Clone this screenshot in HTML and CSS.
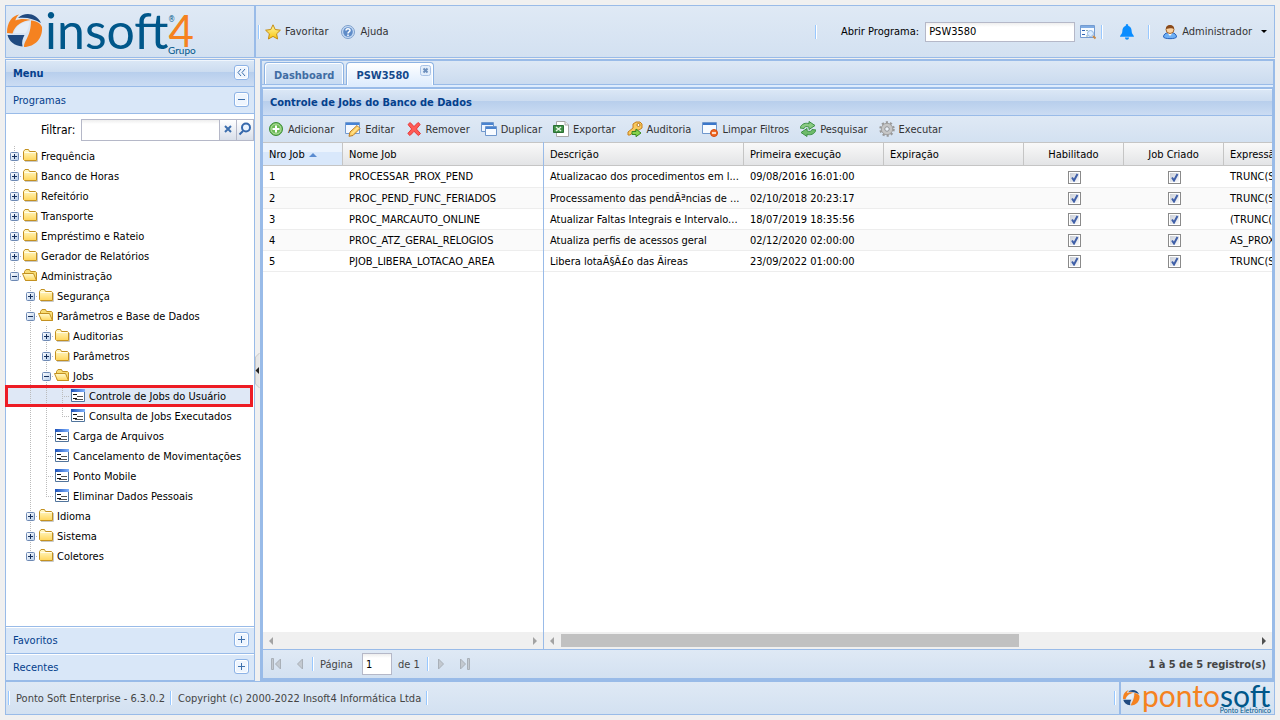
FILE: index.html
```html
<!DOCTYPE html>
<html lang="pt-BR">
<head>
  <meta charset="UTF-8">
  <meta name="viewport" content="width=device-width, initial-scale=1.0">
  <title>Ponto Soft Enterprise</title>
  <link rel="stylesheet" href="styles.css">
</head>
<body>
  <svg class="defs" aria-hidden="true">
    <defs>
      <linearGradient id="g-folder" x1="0" y1="0" x2="0" y2="1"><stop offset="0" stop-color="#fffbd0"/><stop offset="1" stop-color="#ffd65c"/></linearGradient>
      <linearGradient id="g-node" x1="0" y1="0" x2="1" y2="1"><stop offset="0" stop-color="#ffffff"/><stop offset="1" stop-color="#b4cbe8"/></linearGradient>
      <linearGradient id="g-form" x1="0" y1="0" x2="1" y2="0"><stop offset="0" stop-color="#1c50b8"/><stop offset="1" stop-color="#82b4ff"/></linearGradient>
      <linearGradient id="g-star" x1="0" y1="0" x2="0" y2="1"><stop offset="0" stop-color="#fff9a8"/><stop offset="1" stop-color="#f7c40c"/></linearGradient>
    </defs>
    <symbol id="plus" viewBox="0 0 9 9"><rect x=".5" y=".5" width="8" height="8" rx="1" fill="url(#g-node)" stroke="#6d89b4"/><path d="M2 4.500H7M4.500 2V7" stroke="#16305c"/></symbol>
    <symbol id="minus" viewBox="0 0 9 9"><rect x=".5" y=".5" width="8" height="8" rx="1" fill="url(#g-node)" stroke="#6d89b4"/><path d="M2 4.500H7" stroke="#16305c"/></symbol>
    <symbol id="folder" viewBox="0 0 16 16"><path d="M3 13.500H15.500V5" fill="none" stroke="#c9c9c9"/><path d="M1.500 11.500V3.500L3 1.500H6.500L7.500 3.500H13.500L14.500 4.500V12.500H2.500Z" fill="url(#g-folder)" stroke="#c39121"/><path d="M2.500 4.500H13.500" stroke="#fffdec"/></symbol>
    <symbol id="folder-open" viewBox="0 0 16 16"><path d="M2.500 7V3.500L4 1.500H7.500L8.500 3.500H13.500L14.500 4.500V12.500H3.500Z" fill="#f7dc75" stroke="#c39121"/><path d="M.5 5.500H11.500L14.500 12.500H3.500Z" fill="url(#g-folder)" stroke="#c39121" stroke-linejoin="round"/></symbol>
    <symbol id="form" viewBox="0 0 16 16"><path d="M1.500 1.500H14.500V13.500H1.500Z" fill="#fff" stroke="#51749c"/><path d="M1 1H15V4H1Z" fill="url(#g-form)"/><path d="M3 6.500H7M3 10.500H7" stroke="#111"/><path d="M7 8.500H13M5 11.500H13" stroke="#555"/></symbol>
    <symbol id="star" viewBox="0 0 16 16"><path d="M8 .8 10.200 5.500 15.400 6.200 11.600 9.800 12.600 15 8 12.400 3.400 15 4.400 9.800.6 6.200 5.800 5.500Z" fill="url(#g-star)" stroke="#c58d13" stroke-linejoin="round"/></symbol>
    <symbol id="help" viewBox="0 0 16 16"><circle cx="8" cy="8" r="6.500" fill="#c7dcf5" stroke="#7d9fcc"/><circle cx="8" cy="8" r="4.800" fill="#5f8cc8"/><path d="M6 6.600C6 4.200 10 4.200 10 6.500 10 8 8 7.900 8 9.400M8 10.500V12" fill="none" stroke="#fff" stroke-width="1.500"/></symbol>
    <symbol id="find" viewBox="0 0 16 16"><path d="M.5 1.500H14.500V13.500H.5Z" fill="#f7fbff" stroke="#739bd0"/><path d="M1 2H14V4H1Z" fill="#7fabe3"/><path d="M2 6.500H5M2 10.500H5" stroke="#2f65b5"/><path d="M6 6.500H8M6 12H8" stroke="#8aa"/><circle cx="10.500" cy="9.500" r="3" fill="#d9ecff" stroke="#92b5df"/><path d="M13 12 15.500 14.500" stroke="#c98b4a" stroke-width="2"/></symbol>
    <symbol id="bell" viewBox="0 0 16 16"><path d="M8 0C9 0 9.300.8 9.200 1.700 12 2.500 12.600 5 12.700 7.500 12.800 10.500 15 11 15 12.800H1C1 11 3.200 10.500 3.300 7.500 3.400 5 4 2.500 6.800 1.700 6.700.8 7 0 8 0Z" fill="#0a8dff"/><path d="M6 13.500H10C10 16.500 6 16.500 6 13.500Z" fill="#0a8dff"/></symbol>
    <symbol id="user" viewBox="0 0 16 16"><path d="M1.500 13C1.500 10 4 9 6 8.800H10C12 9 14.500 10 14.500 13 14 15.200 2 15.200 1.500 13Z" fill="#6fb0f5" stroke="#2763bd"/><path d="M5.500 9 8 12 10.500 9Z" fill="#fff"/><circle cx="8" cy="5.500" r="4" fill="#fbd4a4" stroke="#a0652d"/><path d="M4 5C3.500-.5 12.500-.5 12 5 10 3.400 6 5 4 5Z" fill="#8a4a1c"/></symbol>
    <symbol id="add" viewBox="0 0 16 16"><circle cx="8" cy="8" r="6.500" fill="#6dbb56" stroke="#3c8e38"/><circle cx="8" cy="8" r="5" fill="none" stroke="#b7e0a4"/><path d="M8 4.500V11.500M4.500 8H11.500" stroke="#fff" stroke-width="2"/></symbol>
    <symbol id="edit" viewBox="0 0 16 16"><path d="M.5 1.500H14.500V12.500H.5Z" fill="#f3f8ff" stroke="#739bd0"/><path d="M1 2H14V4H1Z" fill="#4582d4"/><path d="M5 11 12 4.500 15 7.500 8 14.500 4 15.300Z" fill="#ffd268" stroke="#b77a24"/><path d="M7 12.500 13.300 6.200" stroke="#fff2b0"/></symbol>
    <symbol id="remove" viewBox="0 0 16 16"><path d="M2 3.500 4.200 1.500 8 5.600 12 1.500 14.200 3.400 10.400 8 14.500 12.600 12.300 14.500 8 10.300 4 14.500 1.800 12.500 5.700 8Z" fill="#ff5b55" stroke="#e5383a" stroke-linejoin="round"/></symbol>
    <symbol id="copy" viewBox="0 0 16 16"><path d="M.5 1.500H12.500V10.500H.5Z" fill="#eef5ff" stroke="#6f97cc"/><path d="M1 2H12V4H1Z" fill="#4a83cf"/><path d="M4.500 5.500H15.500V14.500H4.500Z" fill="#f8fbff" stroke="#6f97cc"/><path d="M5 6H15V8H5Z" fill="#4a83cf"/></symbol>
    <symbol id="excel" viewBox="0 0 16 16"><path d="M3.500.5H12L15.500 4V15.500H3.500Z" fill="#fff" stroke="#a8a8a8"/><path d="M12 .5V4H15.500" fill="#eee" stroke="#a8a8a8"/><path d="M.5 4.500H10.500V11.500H.5Z" fill="#3f8f46" stroke="#2b7033"/><path d="M3 6 8 10M8 6 3 10" stroke="#e5f5e2" stroke-width="1.500"/></symbol>
    <symbol id="key" viewBox="0 0 16 16"><path d="M6 3 9 1H13L15 3V7L12 9H9L3 14H1V11L6 7Z" fill="#f9c95c" stroke="#c47f1f"/><circle cx="11.500" cy="4" r="1.500" fill="#fff" stroke="#b5761f"/><path d="M5 10.500H9V8L14 12 9 15.700V13.500H5Z" fill="#87d34b" stroke="#388a23"/></symbol>
    <symbol id="clear" viewBox="0 0 16 16"><path d="M.5 1.500H14.500V12.500H.5Z" fill="#f7fbff" stroke="#6f97cc"/><path d="M1 2H14V4H1Z" fill="#3976ca"/><circle cx="12" cy="12" r="3.500" fill="#f26b25" stroke="#d0490e"/><path d="M10 12H14" stroke="#fff" stroke-width="1.500"/></symbol>
    <symbol id="refresh" viewBox="0 0 16 16"><path d="M0 7C1.500 2.500 6 1.500 9 2.800V.5L15 4.500 9 8.500V6.200C6.500 5 4.500 5.500 4 7.500Z" fill="#8acb82" stroke="#3f9148"/><path d="M16 9C14.500 13.500 10 14.500 7 13.200V15.500L1 11.500 7 7.500V9.800C9.500 11 11.500 10.500 12 8.500Z" fill="#6ebb69" stroke="#3f9148"/></symbol>
    <symbol id="gear" viewBox="0 0 16 16"><circle cx="8" cy="8" r="6.500" fill="none" stroke="#999" stroke-width="2.500" stroke-dasharray="2.100 2"/><circle cx="8" cy="8" r="4.200" fill="none" stroke="#c6c6c6" stroke-width="3"/><circle cx="8" cy="8" r="5.700" fill="none" stroke="#a0a0a0"/><circle cx="8" cy="8" r="2.300" fill="#eaf1f9" stroke="#8d8d8d"/></symbol>
    <symbol id="ball" viewBox="0 0 36 34"><path d="M11 5C17-1 29-1 34 10 27 6 20 4 11 5Z" fill="#204a80"/><path d="M0 20C0 9 5 3 12 1.500 9.500 4 8.500 6 8.500 7.500 13 5.500 18 5.500 24 7 15 8 8 12 5.500 20.500Z" fill="#f58220"/><path d="M.5 22H17.500C15.500 26 14.500 29 15.500 33.500 7 33 2 28 .5 22Z" fill="#204a80"/><path d="M24 7.500C30 8 33 10 35 14 36 25 28 34 17 34 17 27 24 24 24 7.500Z" fill="#f58220"/><path d="M7 20C9 13 14 9.500 22.500 8.500 22 13 21 17 18.500 20Z" fill="#e6eef7"/></symbol>
  </svg>

  <div class="app">
    <header class="top">
      <div class="brand">
        <svg class="brand-mark"><use href="#ball"/></svg>
        <span class="brand-name">insoft</span>
        <span class="brand-four">4</span>
        <span class="brand-reg">®</span>
        <span class="brand-sub">Grupo</span>
      </div>
      <div class="topbar">
        <i class="sep"></i>
        <button class="btn" type="button"><svg class="icon"><use href="#star"/></svg>Favoritar</button>
        <button class="btn" type="button"><svg class="icon"><use href="#help"/></svg>Ajuda</button>
        <i class="sep push"></i>
        <label class="open-label" for="programa">Abrir Programa:</label>
        <input class="field open-field" id="programa" type="text" value="PSW3580">
        <button class="btn find-btn" type="button" aria-label="Localizar"><svg class="icon"><use href="#find"/></svg></button>
        <i class="sep"></i>
        <button class="btn bell-btn" type="button" aria-label="Avisos"><svg class="icon"><use href="#bell"/></svg></button>
        <i class="sep"></i>
        <button class="btn user-btn" type="button"><svg class="icon"><use href="#user"/></svg>Administrador<span class="caret"></span></button>
      </div>
    </header>

    <div class="middle">
      <aside class="sidebar">
        <div class="panel-title menu-title">Menu
          <button class="tool" type="button" aria-label="Recolher"><svg viewBox="0 0 15 15"><path d="M7 4 4 7.500 7 11M11 4 8 7.500 11 11"/></svg></button>
        </div>
        <div class="accordion">Programas
          <button class="tool" type="button" aria-label="Fechar Programas"><svg viewBox="0 0 15 15"><path d="M4 7.500H11"/></svg></button>
        </div>
        <div class="filter">
          <label for="filtro">Filtrar:</label>
          <input class="field" id="filtro" type="text">
          <button class="trigger" type="button" aria-label="Limpar"><svg viewBox="0 0 16 20"><path d="M5 6 11 12M11 6 5 12" stroke="#3d6fae" stroke-width="2"/></svg></button>
          <button class="trigger" type="button" aria-label="Pesquisar"><svg viewBox="0 0 16 20"><circle cx="9" cy="7.500" r="4" fill="#eaf4ff" stroke="#3568ac" stroke-width="2"/><path d="M6 11 2.500 14.500" stroke="#3568ac" stroke-width="2"/></svg></button>
        </div>
        <ul class="tree">
          <li><i class="cell node"><svg><use href="#plus"/></svg></i><svg class="icon"><use href="#folder"/></svg><a href="#">Frequência</a></li>
          <li><i class="cell node"><svg><use href="#plus"/></svg></i><svg class="icon"><use href="#folder"/></svg><a href="#">Banco de Horas</a></li>
          <li><i class="cell node"><svg><use href="#plus"/></svg></i><svg class="icon"><use href="#folder"/></svg><a href="#">Refeitório</a></li>
          <li><i class="cell node"><svg><use href="#plus"/></svg></i><svg class="icon"><use href="#folder"/></svg><a href="#">Transporte</a></li>
          <li><i class="cell node"><svg><use href="#plus"/></svg></i><svg class="icon"><use href="#folder"/></svg><a href="#">Empréstimo e Rateio</a></li>
          <li><i class="cell node"><svg><use href="#plus"/></svg></i><svg class="icon"><use href="#folder"/></svg><a href="#">Gerador de Relatórios</a></li>
          <li><i class="cell node end"><svg><use href="#minus"/></svg></i><svg class="icon"><use href="#folder-open"/></svg><a href="#">Administração</a></li>
          <li><i class="cell"></i><i class="cell node"><svg><use href="#plus"/></svg></i><svg class="icon"><use href="#folder"/></svg><a href="#">Segurança</a></li>
          <li><i class="cell"></i><i class="cell node"><svg><use href="#minus"/></svg></i><svg class="icon"><use href="#folder-open"/></svg><a href="#">Parâmetros e Base de Dados</a></li>
          <li><i class="cell"></i><i class="cell line"></i><i class="cell node"><svg><use href="#plus"/></svg></i><svg class="icon"><use href="#folder"/></svg><a href="#">Auditorias</a></li>
          <li><i class="cell"></i><i class="cell line"></i><i class="cell node"><svg><use href="#plus"/></svg></i><svg class="icon"><use href="#folder"/></svg><a href="#">Parâmetros</a></li>
          <li><i class="cell"></i><i class="cell line"></i><i class="cell node"><svg><use href="#minus"/></svg></i><svg class="icon"><use href="#folder-open"/></svg><a href="#">Jobs</a></li>
          <li class="selected"><i class="cell"></i><i class="cell line"></i><i class="cell line"></i><i class="cell node"></i><svg class="icon"><use href="#form"/></svg><a href="#">Controle de Jobs do Usuário</a></li>
          <li><i class="cell"></i><i class="cell line"></i><i class="cell line"></i><i class="cell node end"></i><svg class="icon"><use href="#form"/></svg><a href="#">Consulta de Jobs Executados</a></li>
          <li><i class="cell"></i><i class="cell line"></i><i class="cell node"></i><svg class="icon"><use href="#form"/></svg><a href="#">Carga de Arquivos</a></li>
          <li><i class="cell"></i><i class="cell line"></i><i class="cell node"></i><svg class="icon"><use href="#form"/></svg><a href="#">Cancelamento de Movimentações</a></li>
          <li><i class="cell"></i><i class="cell line"></i><i class="cell node"></i><svg class="icon"><use href="#form"/></svg><a href="#">Ponto Mobile</a></li>
          <li><i class="cell"></i><i class="cell line"></i><i class="cell node end"></i><svg class="icon"><use href="#form"/></svg><a href="#">Eliminar Dados Pessoais</a></li>
          <li><i class="cell"></i><i class="cell node"><svg><use href="#plus"/></svg></i><svg class="icon"><use href="#folder"/></svg><a href="#">Idioma</a></li>
          <li><i class="cell"></i><i class="cell node"><svg><use href="#plus"/></svg></i><svg class="icon"><use href="#folder"/></svg><a href="#">Sistema</a></li>
          <li><i class="cell"></i><i class="cell node end"><svg><use href="#plus"/></svg></i><svg class="icon"><use href="#folder"/></svg><a href="#">Coletores</a></li>
        </ul>
        <div class="accordion closed">Favoritos
          <button class="tool" type="button" aria-label="Abrir Favoritos"><svg viewBox="0 0 15 15"><path d="M4 7.500H11M7.500 4V11"/></svg></button>
        </div>
        <div class="accordion closed">Recentes
          <button class="tool" type="button" aria-label="Abrir Recentes"><svg viewBox="0 0 15 15"><path d="M4 7.500H11M7.500 4V11"/></svg></button>
        </div>
      </aside>

      <div class="splitter"><svg viewBox="0 0 5 35"><path d="M4.500 0 .5 4V31L4.500 35" fill="#e6e6e6" stroke="#c8c8c8"/><path d="M4 14V21L.5 17.500Z" fill="#222"/></svg></div>

      <main class="content">
        <nav class="tabs">
          <a class="tab" href="#">Dashboard</a>
          <a class="tab active" href="#">PSW3580<svg class="tab-close" viewBox="0 0 11 11"><rect x=".5" y=".5" width="10" height="10" rx="2" fill="#e3eefb" stroke="#a9c3e6"/><path d="M3.500 3.500 7.500 7.500M7.500 3.500 3.500 7.500" stroke="#6e90bd" stroke-width="2"/></svg></a>
        </nav>
        <section class="grid-panel">
          <h1 class="panel-title">Controle de Jobs do Banco de Dados</h1>
          <div class="toolbar">
            <button class="btn" type="button"><svg class="icon"><use href="#add"/></svg>Adicionar</button>
            <button class="btn" type="button"><svg class="icon"><use href="#edit"/></svg>Editar</button>
            <button class="btn" type="button"><svg class="icon"><use href="#remove"/></svg>Remover</button>
            <button class="btn" type="button"><svg class="icon"><use href="#copy"/></svg>Duplicar</button>
            <button class="btn" type="button"><svg class="icon"><use href="#excel"/></svg>Exportar</button>
            <button class="btn" type="button"><svg class="icon"><use href="#key"/></svg>Auditoria</button>
            <button class="btn" type="button"><svg class="icon"><use href="#clear"/></svg>Limpar Filtros</button>
            <button class="btn" type="button"><svg class="icon"><use href="#refresh"/></svg>Pesquisar</button>
            <button class="btn" type="button"><svg class="icon"><use href="#gear"/></svg>Executar</button>
          </div>
          <div class="grid">
            <div class="locked">
              <table>
                <colgroup><col class="w80"><col class="w200"></colgroup>
                <thead><tr><th class="sorted">Nro Job<span class="sort"></span></th><th>Nome Job</th></tr></thead>
                <tbody>
                  <tr><td>1</td><td>PROCESSAR_PROX_PEND</td></tr>
                  <tr><td>2</td><td>PROC_PEND_FUNC_FERIADOS</td></tr>
                  <tr><td>3</td><td>PROC_MARCAUTO_ONLINE</td></tr>
                  <tr><td>4</td><td>PROC_ATZ_GERAL_RELOGIOS</td></tr>
                  <tr><td>5</td><td>PJOB_LIBERA_LOTACAO_AREA</td></tr>
                </tbody>
              </table>
              <div class="scroll"><span class="arrow left off"></span><span class="arrow right off"></span></div>
            </div>
            <div class="normal">
              <table>
                <colgroup><col class="w200"><col class="w140"><col class="w140"><col class="w100"><col class="w100"><col class="w200"></colgroup>
                <thead><tr><th>Descrição</th><th>Primeira execução</th><th>Expiração</th><th class="center">Habilitado</th><th class="center">Job Criado</th><th>Expressão</th></tr></thead>
                <tbody>
                  <tr><td>Atualizacao dos procedimentos em l...</td><td>09/08/2016 16:01:00</td><td></td><td class="center"><input type="checkbox" aria-label="Habilitado 1" checked></td><td class="center"><input type="checkbox" aria-label="Job Criado 1" checked></td><td>TRUNC(SYSDATE)</td></tr>
                  <tr><td>Processamento das pendÃªncias de ...</td><td>02/10/2018 20:23:17</td><td></td><td class="center"><input type="checkbox" aria-label="Habilitado 2" checked></td><td class="center"><input type="checkbox" aria-label="Job Criado 2" checked></td><td>TRUNC(SYSDATE)</td></tr>
                  <tr><td>Atualizar Faltas Integrais e Intervalo...</td><td>18/07/2019 18:35:56</td><td></td><td class="center"><input type="checkbox" aria-label="Habilitado 3" checked></td><td class="center"><input type="checkbox" aria-label="Job Criado 3" checked></td><td>(TRUNC(SYSDATE))</td></tr>
                  <tr><td>Atualiza perfis de acessos geral</td><td>02/12/2020 02:00:00</td><td></td><td class="center"><input type="checkbox" aria-label="Habilitado 4" checked></td><td class="center"><input type="checkbox" aria-label="Job Criado 4" checked></td><td>AS_PROX</td></tr>
                  <tr><td>Libera lotaÃ§Ã£o das Ãireas</td><td>23/09/2022 01:00:00</td><td></td><td class="center"><input type="checkbox" aria-label="Habilitado 5" checked></td><td class="center"><input type="checkbox" aria-label="Job Criado 5" checked></td><td>TRUNC(SYSDATE)</td></tr>
                </tbody>
              </table>
              <div class="scroll"><span class="arrow left"></span><span class="track"><span class="thumb"></span></span><span class="arrow right"></span></div>
            </div>
          </div>
          <div class="pager">
            <button class="page-btn" type="button" aria-label="Primeira"><svg viewBox="0 0 16 16"><path d="M3.500 2.500H5.500V13.500H3.500ZM12.500 3V13L7.500 8Z"/></svg></button>
            <button class="page-btn" type="button" aria-label="Anterior"><svg viewBox="0 0 16 16"><path d="M10.500 3V13L5.500 8Z"/></svg></button>
            <i class="sep"></i>
            <label for="pagina">Página</label>
            <input class="field page-field" id="pagina" type="text" value="1">
            <span>de 1</span>
            <i class="sep"></i>
            <button class="page-btn" type="button" aria-label="Próxima"><svg viewBox="0 0 16 16"><path d="M5.500 3V13L10.500 8Z"/></svg></button>
            <button class="page-btn" type="button" aria-label="Última"><svg viewBox="0 0 16 16"><path d="M3.500 3V13L8.500 8ZM10.500 2.500H12.500V13.500H10.500Z"/></svg></button>
            <strong class="total">1 à 5 de 5 registro(s)</strong>
          </div>
        </section>
      </main>
    </div>

    <footer class="bottom">
      <div class="status">
        <i class="sep"></i><span>Ponto Soft Enterprise - 6.3.0.2</span>
        <i class="sep"></i><span>Copyright (c) 2000-2022 Insoft4 Informática Ltda</span>
        <i class="sep"></i><i class="sep push"></i>
      </div>
      <div class="product">
        <svg class="product-mark"><use href="#ball"/></svg>
        <span class="product-name">ponto<b>soft</b></span>
        <span class="product-sub">Ponto Eletrônico</span>
      </div>
    </footer>
  </div>
</body>
</html>
```
FILE: styles.css
```css
* {
  box-sizing: border-box;
}
body {
  margin: 0;
  background-color: #f0f0f0;
  font-family: "DejaVu Sans Condensed", "DejaVu Sans", Tahoma, sans-serif;
  font-size: 11px;
  line-height: 15px;
  color: #000;
}
button, input {
  font: inherit;
  margin: 0;
}
button {
  padding: 0;
  border: 0;
  background: none;
  cursor: pointer;
}
svg {
  display: block;
  flex: none;
}
a {
  color: inherit;
  text-decoration: none;
}
.defs {
  position: absolute;
  width: 0;
  height: 0;
}
.icon {
  width: 16px;
  height: 16px;
}
.app {
  display: flex;
  flex-direction: column;
  height: 100vh;
  padding: 5px;
}

/* cabeçalho */
.top {
  display: flex;
  height: 53px;
  margin-bottom: 1px;
}
.brand, .topbar, .bottom {
  background: linear-gradient(#dfe9f5, #d3e1f1);
  border: 1px solid #99bbe8;
}
.brand {
  position: relative;
  display: flex;
  width: 250px;
  padding: 1px;
  line-height: 46px;
}
.brand-mark {
  width: 36px;
  height: 34px;
  margin-top: 6px;
}
.brand-name, .brand-four {
  font-family: Lato, sans-serif;
  font-size: 50px;
  color: #00578a;
}
.brand-name {
  margin-left: 2px;
}
.brand-four {
  font-size: 44px;
  color: #f58220;
}
.brand-reg {
  position: absolute;
  left: 162px;
  top: 9px;
  font-size: 8px;
  line-height: 10px;
  color: #00578a;
}
.brand-sub {
  position: absolute;
  left: 162px;
  top: 38px;
  font-family: Lato, sans-serif;
  font-size: 10px;
  line-height: 12px;
  color: #00578a;
}
.topbar {
  display: flex;
  flex: 1;
  align-items: center;
  padding: 0 7px 0 2px;
}
.sep {
  width: 2px;
  height: 14px;
  border-left: 1px solid #98c8ff;
  border-right: 1px solid #fff;
}
.push {
  margin-left: auto;
}
.btn {
  display: flex;
  align-items: center;
  gap: 4px;
  margin-left: 12px;
  color: #333;
  white-space: nowrap;
}
.sep + .btn {
  margin-left: 5px;
}
.field {
  height: 20px;
  padding: 0 3px;
  border: 1px solid #b5b8c8;
  background: linear-gradient(#eeeeee, #ffffff 4px);
  color: #000;
}
.open-label {
  margin: 0 6px 0 24px;
}
.open-field {
  width: 150px;
}
.find-btn {
  margin: 0 5px;
}
.topbar .bell-btn {
  margin: 0 13px 0 16px;
}
.topbar .user-btn {
  margin-left: 12px;
}
.caret {
  margin-left: 5px;
  border: 3px solid transparent;
  border-top-color: #000;
  border-bottom: 0;
}

/* menu lateral */
.middle {
  display: flex;
  flex: 1;
  min-height: 0;
}
.sidebar {
  display: flex;
  flex-direction: column;
  width: 250px;
  border: 1px solid #99bbe8;
  background-color: #fff;
}
.panel-title {
  display: flex;
  align-items: center;
  justify-content: space-between;
  height: 27px;
  margin: 0;
  padding: 0 5px 0 7px;
  border-bottom: 1px solid #99bbe8;
  background: linear-gradient(#dce8f6, #ccdcf0 45%, #b7ceec 46%, #cbdcf3);
  box-shadow: inset 0 1px #f0f6fd;
  font-size: 11px;
  font-weight: bold;
  color: #04408c;
}
.accordion {
  display: flex;
  align-items: center;
  justify-content: space-between;
  height: 27px;
  padding: 0 5px 0 7px;
  border-bottom: 1px solid #99bbe8;
  background-color: #d9e7f8;
  color: #04408c;
}
.accordion.closed {
  border-top: 1px solid #99bbe8;
  border-bottom: 0;
  box-shadow: inset 0 1px #fff;
}
.tool {
  width: 15px;
  height: 15px;
  margin-bottom: 2px;
  border-radius: 3px;
  background-color: #eef5fe;
  box-shadow: inset 0 0 0 1px #8db3e6, inset 0 0 0 2px #fff;
}
.tool svg {
  fill: none;
  stroke: #3e70ac;
}
.filter {
  display: flex;
  align-items: center;
  height: 32px;
  padding-left: 35px;
}
.filter label {
  margin-right: 6px;
  font-size: 12px;
}
.filter .field {
  flex: 1;
  min-width: 0;
  height: 22px;
}
.trigger {
  width: 17px;
  height: 22px;
  border: 1px solid #b5b8c8;
  border-left: 0;
  background: linear-gradient(#fff, #d8dfea);
}
.trigger svg {
  width: 16px;
  height: 20px;
}
.tree {
  flex: 1;
  min-height: 0;
  margin: 0;
  padding: 0;
  list-style: none;
}
.tree li {
  display: flex;
  align-items: center;
  height: 20px;
  white-space: nowrap;
}
.tree a {
  margin-left: 3px;
}
.tree .selected {
  margin-right: 2px;
  background-color: #dfe8f6;
  outline: 3px solid #ed1c24;
  outline-offset: -2px;
}
.cell {
  width: 16px;
  height: 20px;
}
.cell svg {
  width: 9px;
  height: 9px;
  margin: 6px 0 0 4px;
}
.line {
  background: repeating-linear-gradient(#bbb 0 1px, transparent 1px 2px) 8px 0 / 1px 100% no-repeat;
}
.node {
  background:
    repeating-linear-gradient(#bbb 0 1px, transparent 1px 2px) 8px 0 / 1px 100% no-repeat,
    repeating-linear-gradient(90deg, #bbb 0 1px, transparent 1px 2px) 8px 10px / 8px 1px no-repeat;
}
.node.end {
  background-size: 1px 10px, 8px 1px;
}
.splitter {
  display: flex;
  align-items: center;
  width: 5px;
}
.splitter svg {
  width: 5px;
  height: 35px;
}

/* área principal */
.content {
  display: flex;
  flex: 1;
  flex-direction: column;
  min-width: 0;
  border: 2px solid #99bbe8;
}
.tabs {
  display: flex;
  align-items: flex-end;
  gap: 2px;
  height: 26px;
  padding: 0 2px 2px;
  background: linear-gradient(#99bbe8, #99bbe8) 0 23px / 100% 1px no-repeat, linear-gradient(#dde8f5, #cbdbef 23px, #deecfd 23px);
}
.tab {
  display: flex;
  height: 22px;
  margin-bottom: 1px;
  padding: 0 9px;
  border: 1px solid #8db3e3;
  border-bottom: 0;
  border-radius: 4px 4px 0 0;
  background: linear-gradient(#dce9f8, #c8dbf2);
  box-shadow: inset 1px 1px #fff, inset -1px 0 #fff;
  font-weight: bold;
  line-height: 25px;
  color: #416da3;
}
.tab.active {
  height: 23px;
  margin-bottom: 0;
  padding-right: 2px;
  background: linear-gradient(#fff, #deecfd);
  color: #15498b;
}
.tab-close {
  width: 11px;
  height: 11px;
  margin: 2px 0 0 11px;
}
.grid-panel {
  display: flex;
  flex: 1;
  flex-direction: column;
  min-height: 0;
  border: 1px solid #99bbe8;
  border-top-width: 2px;
}
.toolbar {
  display: flex;
  align-items: center;
  height: 26px;
  padding-left: 5px;
  background: linear-gradient(#dfe9f5, #d3e1f1);
}
.toolbar .btn {
  margin: 0 11px 0 0;
}
.grid {
  display: flex;
  flex: 1;
  min-height: 0;
  background-color: #fff;
}
.locked, .normal {
  display: flex;
  flex-direction: column;
  justify-content: space-between;
  overflow: hidden;
}
.locked {
  width: 281px;
  border-right: 1px solid #99bbe8;
}
.locked th:last-child {
  border-right: 0;
}
.normal {
  flex: 1;
}
table {
  table-layout: fixed;
  width: 0;
  border-collapse: separate;
  border-spacing: 0;
}
.w80 { width: 80px; }
.w100 { width: 100px; }
.w140 { width: 140px; }
.w200 { width: 200px; }
th, td {
  overflow: hidden;
  padding: 0 0 0 6px;
  text-align: left;
  white-space: nowrap;
}
th {
  height: 24px;
  border: 1px solid #c5c5c5;
  border-left: 0;
  background: linear-gradient(#f9f9f9, #e3e4e6);
  font-weight: normal;
}
th.sorted {
  background: linear-gradient(#ebf3fd 40%, #d9e8fb 41%);
}
td {
  height: 21px;
  border-bottom: 1px solid #ededed;
}
tbody tr:first-child td {
  height: 22px;
}
tbody tr:nth-child(even) {
  background-color: #fafafa;
}
.center {
  padding: 0 6px;
  text-align: center;
}
.sort {
  display: inline-block;
  margin-left: 4px;
  border: 4px solid transparent;
  border-top: 0;
  border-bottom-color: #5a8bd0;
  vertical-align: middle;
}
input[type="checkbox"] {
  appearance: none;
  display: inline-block;
  width: 13px;
  height: 13px;
  border: 1px solid #8a8a8a;
  outline: 1px solid #fff;
  outline-offset: -2px;
  vertical-align: middle;
  background: linear-gradient(135deg, #c5cad4, #fff);
}
input[type="checkbox"]:checked {
  background: url("data:image/svg+xml,%3Csvg xmlns='http://www.w3.org/2000/svg' viewBox='0 0 11 11'%3E%3Cpath d='M3 5.500 5 8.500 8.500 2' fill='none' stroke='%233f5fa8' stroke-width='2'/%3E%3C/svg%3E"), linear-gradient(135deg, #c5cad4, #fff);
}
.scroll {
  display: flex;
  align-items: center;
  justify-content: space-between;
  height: 17px;
  padding: 0 6px;
  background-color: #f0f0f0;
}
.arrow {
  border: 4px solid transparent;
}
.arrow.left {
  border-left: 0;
  border-right-color: #505050;
}
.arrow.right {
  border-right: 0;
  border-left-color: #505050;
}
.arrow.left, .arrow.off.left {
  border-right-color: #a3a3a3;
}
.arrow.off.right {
  border-left-color: #a3a3a3;
}
.track {
  flex: 1;
  margin: 0 7px;
}
.thumb {
  display: block;
  width: 66%;
  height: 13px;
  background-color: #c1c1c1;
}
.pager {
  display: flex;
  align-items: center;
  height: 29px;
  padding: 0 6px 0 1px;
  border-top: 1px solid #99bbe8;
  background: linear-gradient(#dfe9f5, #d3e1f1);
  color: #444;
}
.page-btn {
  margin: 0 4px;
}
.page-btn svg {
  width: 16px;
  height: 16px;
  fill: #c3c9d0;
  stroke: #a9b0b8;
}
.pager label {
  margin: 0 9px 0 6px;
}
.page-field {
  width: 30px;
  height: 22px;
  margin-right: 6px;
}
.pager span {
  margin-right: 7px;
}
.total {
  margin-left: auto;
}

/* rodapé */
.bottom {
  display: flex;
  height: 34px;
}
.status {
  display: flex;
  flex: 1;
  align-items: center;
  padding: 0 3px 0 2px;
  color: #444;
}
.status span {
  margin: 0 5px 0 6px;
}
.product {
  position: relative;
  display: flex;
  align-items: flex-start;
  width: 155px;
  padding-left: 2px;
  overflow: hidden;
  border-left: 2px solid #99bbe8;
}
.product-mark {
  width: 17px;
  height: 17px;
  margin-top: 7px;
}
.product-name {
  margin-left: 2px;
  font-family: Lato, sans-serif;
  font-size: 30px;
  line-height: 26px;
  color: #f58220;
}
.product-name b {
  font-weight: normal;
  color: #00578a;
}
.product-sub {
  position: absolute;
  right: 3px;
  bottom: 0;
  font-family: Lato, sans-serif;
  font-size: 7px;
  line-height: 8px;
  color: #00578a;
}
```
